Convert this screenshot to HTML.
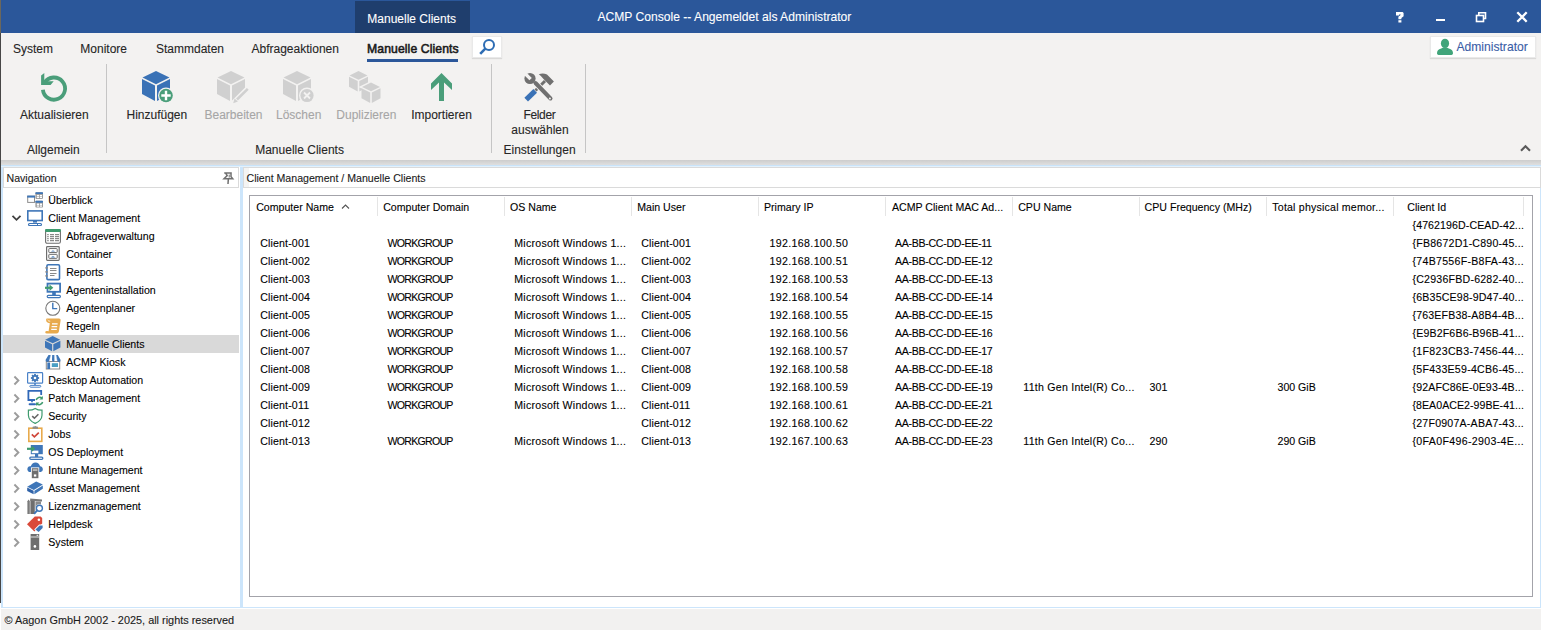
<!DOCTYPE html>
<html><head><meta charset="utf-8"><style>
html,body{margin:0;padding:0;}
body{width:1541px;height:630px;overflow:hidden;position:relative;background:#f3f2f1;font-family:"Liberation Sans", sans-serif;}
.t{position:absolute;white-space:nowrap;-webkit-text-stroke:0.1px currentColor;}
svg{overflow:visible}
</style></head><body>
<div style="position:absolute;left:0px;top:0px;width:1541px;height:33px;background:#2b579a"></div>
<div style="position:absolute;left:355px;top:1px;width:115px;height:32px;background:#1f3e6d"></div>
<div class="t" style="left:367.30px;top:12.84px;font-size:12px;line-height:12px;color:#ffffff;font-weight:normal;">Manuelle Clients</div>
<div class="t" style="left:597.50px;top:10.76px;font-size:12.1px;line-height:12.1px;color:#ffffff;font-weight:normal;">ACMP Console -- Angemeldet als Administrator</div>
<svg style="position:absolute;left:1394px;top:11px" width="11" height="12" viewBox="0 0 11 12"><path d="M2 1 H8.6 L9.6 2 V5.2 L7.4 7 V8.2 H4.4 V5.8 L6.6 4 V3.4 H5 V4.4 H2 Z" fill="#fff"/><rect x="4.4" y="9.2" width="3" height="2.3" fill="#fff"/></svg>
<div style="position:absolute;left:1435.5px;top:18.8px;width:9.5px;height:2.4px;background:#fff"></div>
<svg style="position:absolute;left:1475px;top:11px" width="12" height="12" viewBox="0 0 12 12"><rect x="1.5" y="4.5" width="7" height="6" stroke="#fff" stroke-width="1.6" fill="none"/><path d="M3.8 4.5 V1.8 H10.5 V7.5 H8.5" stroke="#fff" stroke-width="1.6" fill="none"/></svg>
<svg style="position:absolute;left:1516px;top:11px" width="12" height="12" viewBox="0 0 12 12"><path d="M1.3 1.3 L10.7 10.7 M10.7 1.3 L1.3 10.7" stroke="#fff" stroke-width="2.3"/></svg>
<div class="t" style="left:13.00px;top:42.84px;font-size:12px;line-height:12px;color:#262626;font-weight:normal;">System</div>
<div class="t" style="left:80.30px;top:42.84px;font-size:12px;line-height:12px;color:#262626;font-weight:normal;">Monitore</div>
<div class="t" style="left:156.00px;top:42.84px;font-size:12px;line-height:12px;color:#262626;font-weight:normal;">Stammdaten</div>
<div class="t" style="left:251.50px;top:42.84px;font-size:12px;line-height:12px;color:#262626;font-weight:normal;">Abfrageaktionen</div>
<div class="t" style="left:367.00px;top:42.67px;font-size:12.2px;line-height:12.2px;color:#1a1a1a;font-weight:normal;letter-spacing:0.1px;-webkit-text-stroke:0.55px #1a1a1a">Manuelle Clients</div>
<div style="position:absolute;left:367px;top:59px;width:91px;height:3px;background:#2b579a"></div>
<div style="position:absolute;left:472px;top:36px;width:30px;height:22px;background:#fff;border:1px solid #e9e9e9;box-sizing:border-box;box-shadow:0 1px 1px rgba(0,0,0,0.10)"></div>
<svg style="position:absolute;left:478px;top:38px" width="20" height="20" viewBox="0 0 20 20"><circle cx="11" cy="7" r="5" stroke="#2e6db4" stroke-width="2" fill="none"/><path d="M7.3 10.7 L2.2 15.8" stroke="#2e6db4" stroke-width="2.6"/></svg>
<div style="position:absolute;left:1430px;top:36px;width:106px;height:22px;background:#fff;border:1px solid #e9e9e9;box-sizing:border-box;box-shadow:0 1px 1px rgba(0,0,0,0.10)"></div>
<svg style="position:absolute;left:1436px;top:38px" width="18" height="18" viewBox="0 0 18 18"><ellipse cx="9" cy="5.4" rx="4.1" ry="4.7" fill="#40a47a"/><path d="M1 15.6 Q0.8 11.4 5.2 10.4 L7.2 9.6 L10.8 9.6 L12.8 10.4 Q17.2 11.4 17 15.6 Q16.8 17 15.5 17 L2.5 17 Q1.2 17 1 15.6 Z" fill="#40a47a"/></svg>
<div class="t" style="left:1456.50px;top:41.06px;font-size:12.1px;line-height:12.1px;color:#3a5da6;font-weight:normal;">Administrator</div>
<div style="position:absolute;left:106px;top:64px;width:1px;height:89px;background:#c5c5c5"></div>
<div style="position:absolute;left:491px;top:64px;width:1px;height:89px;background:#c5c5c5"></div>
<div style="position:absolute;left:585px;top:64px;width:1px;height:89px;background:#c5c5c5"></div>
<div class="t" style="left:20.00px;top:109.24px;font-size:12px;line-height:12px;color:#262626;font-weight:normal;">Aktualisieren</div>
<div class="t" style="left:126.50px;top:109.24px;font-size:12px;line-height:12px;color:#262626;font-weight:normal;">Hinzufügen</div>
<div class="t" style="left:204.50px;top:109.24px;font-size:12px;line-height:12px;color:#a6a6a6;font-weight:normal;">Bearbeiten</div>
<div class="t" style="left:276.00px;top:109.24px;font-size:12px;line-height:12px;color:#a6a6a6;font-weight:normal;">Löschen</div>
<div class="t" style="left:336.30px;top:109.24px;font-size:12px;line-height:12px;color:#a6a6a6;font-weight:normal;">Duplizieren</div>
<div class="t" style="left:411.20px;top:109.24px;font-size:12px;line-height:12px;color:#262626;font-weight:normal;">Importieren</div>
<div class="t" style="left:523.50px;top:108.84px;font-size:12px;line-height:12px;color:#262626;font-weight:normal;letter-spacing:-0.35px">Felder</div>
<div class="t" style="left:511.30px;top:123.84px;font-size:12px;line-height:12px;color:#262626;font-weight:normal;">auswählen</div>
<div class="t" style="left:27.00px;top:143.84px;font-size:12px;line-height:12px;color:#262626;font-weight:normal;">Allgemein</div>
<div class="t" style="left:255.20px;top:143.84px;font-size:12px;line-height:12px;color:#262626;font-weight:normal;">Manuelle Clients</div>
<div class="t" style="left:503.50px;top:143.84px;font-size:12px;line-height:12px;color:#262626;font-weight:normal;">Einstellungen</div>
<svg style="position:absolute;left:1519px;top:144px" width="12" height="8" viewBox="0 0 12 8"><path d="M2 6.8 L6.5 2.3 L11 6.8" stroke="#5a5a5a" stroke-width="2.1" fill="none"/></svg>
<svg style="position:absolute;left:36px;top:68px" width="36" height="36" viewBox="0 0 36 36"><path d="M6.9 21.7 A11.1 11.1 0 1 0 8.6 14.6" stroke="#4a9e7a" stroke-width="3.8" fill="none"/><path d="M5.1 7.5 L8.3 4.9 L8.3 13.3 L17.7 13.3 L14.6 16.9 L5.1 16.9 Z" fill="#4a9e7a"/></svg>
<svg style="position:absolute;left:142px;top:70px" width="32" height="34" viewBox="0 0 32 34"><path d="M14 1 L27.5 7.6 L14 14.2 L0.5 7.6 Z" fill="#3a72b6"/><path d="M0 9 L13 15.4 L13 31 L0 24 Z" fill="#3a72b6"/><path d="M28 9 L15 15.4 L15 31 L28 24 Z" fill="#3a72b6"/><circle cx="24" cy="25.5" r="8" fill="#f3f2f1"/><circle cx="24" cy="25.5" r="6.8" fill="#4a9e7a"/><path d="M24 20.8 V30.2 M19.3 25.5 H28.7" stroke="#fff" stroke-width="2.4"/></svg>
<svg style="position:absolute;left:217px;top:70px" width="34" height="34" viewBox="0 0 34 34"><path d="M14 1 L27.5 7.6 L14 14.2 L0.5 7.6 Z" fill="#d0d0d0"/><path d="M0 9 L13 15.4 L13 31 L0 24 Z" fill="#d0d0d0"/><path d="M28 9 L15 15.4 L15 31 L28 24 Z" fill="#d0d0d0"/><path d="M15.5 34 L31.5 18" stroke="#f3f2f1" stroke-width="5.4"/><path d="M20 29.5 L30.8 18.8" stroke="#d0d0d0" stroke-width="2.6"/><path d="M16.2 33.2 L17.6 28.4 L20.9 31.6 Z" fill="#d0d0d0"/></svg>
<svg style="position:absolute;left:283px;top:70px" width="32" height="34" viewBox="0 0 32 34"><path d="M14 1 L27.5 7.6 L14 14.2 L0.5 7.6 Z" fill="#d0d0d0"/><path d="M0 9 L13 15.4 L13 31 L0 24 Z" fill="#d0d0d0"/><path d="M28 9 L15 15.4 L15 31 L28 24 Z" fill="#d0d0d0"/><circle cx="24" cy="25.5" r="8" fill="#f3f2f1"/><circle cx="24" cy="25.5" r="6.6" fill="#d0d0d0"/><path d="M21 22.5 L27 28.5 M27 22.5 L21 28.5" stroke="#f3f2f1" stroke-width="1.8"/></svg>
<svg style="position:absolute;left:348px;top:70px" width="34" height="34" viewBox="0 0 34 34"><g transform="translate(1,1)"><path d="M9.5 0 L18.5 4.4 L9.5 8.8 L0.5 4.4 Z" fill="#d0d0d0"/><path d="M0 5.8 L8.7 10.1 L8.7 20.5 L0 15.8 Z" fill="#d0d0d0"/><path d="M19 5.8 L10.3 10.1 L10.3 20.5 L19 15.8 Z" fill="#d0d0d0"/></g><path d="M13 12 L33 12 L33 34 L13 34 Z" fill="#f3f2f1" opacity="0"/><g><path d="M22 11.5 L33.5 17 L22 22.5 L10.5 17 Z" fill="#f3f2f1"/></g><g transform="translate(13.5,12.5)"><path d="M9.5 0 L18.5 4.4 L9.5 8.8 L0.5 4.4 Z" fill="#d0d0d0"/><path d="M0 5.8 L8.7 10.1 L8.7 20.5 L0 15.8 Z" fill="#d0d0d0"/><path d="M19 5.8 L10.3 10.1 L10.3 20.5 L19 15.8 Z" fill="#d0d0d0"/></g></svg>
<svg style="position:absolute;left:430px;top:72px" width="23" height="30" viewBox="0 0 23 30"><path d="M11.5 1 L22 11.5 L22 18 L14 10.5 L14 29 L9 29 L9 10.5 L1 18 L1 11.5 Z" fill="#4a9e7a"/></svg>
<svg style="position:absolute;left:522px;top:72px" width="34" height="32" viewBox="0 0 34 32">
<path d="M16.8 2.3 Q21 0.6 25 2.6 L31.9 9.6 L28 13.5 L21.5 7 Q19.5 4.2 16.8 2.3 Z" fill="#707070"/>
<path d="M23 9 L13.5 18.5" stroke="#707070" stroke-width="3"/>
<path d="M13.2 18.8 L4.2 27.6" stroke="#3a72b6" stroke-width="5.2"/>
<path d="M13.5 11 L28.5 26.5" stroke="#f3f2f1" stroke-width="6" stroke-linecap="round"/>
<circle cx="8" cy="6.5" r="6" fill="#f3f2f1"/>
<path d="M13.5 11 L28.5 26.5" stroke="#707070" stroke-width="4" stroke-linecap="round"/>
<circle cx="8" cy="6.5" r="5.6" fill="#707070"/>
<path d="M8.6 7.1 L2.5 1" stroke="#f3f2f1" stroke-width="3.4"/>
<circle cx="27.9" cy="26.4" r="1" fill="#f3f2f1"/></svg>
<div style="position:absolute;left:0px;top:160px;width:1541px;height:5px;background:linear-gradient(#cdcdcd,#dfdfdf)"></div>
<div style="position:absolute;left:0px;top:165px;width:1541px;height:1px;background:#c9e3f9"></div>
<div style="position:absolute;left:0px;top:166px;width:1541px;height:1px;background:#e3f1fc"></div>
<div style="position:absolute;left:0px;top:0px;width:1px;height:33px;background:#6b675c"></div>
<div style="position:absolute;left:0px;top:33px;width:1px;height:570px;background:#474747"></div>
<div style="position:absolute;left:1px;top:167px;width:239px;height:440px;background:#fff"></div>
<div style="position:absolute;left:1px;top:167px;width:2px;height:440px;background:#cce5fb"></div>
<div style="position:absolute;left:3px;top:167px;width:236px;height:21px;background:#fff;border:1px solid #dadada;box-sizing:border-box"></div>
<div class="t" style="left:6.50px;top:173.43px;font-size:10.6px;line-height:10.6px;color:#1a1a1a;font-weight:normal;">Navigation</div>
<svg style="position:absolute;left:221px;top:170px" width="14" height="16" viewBox="0 0 14 16"><path d="M3.2 2.9 H10.8 M4.6 3 L6.2 5.6 L3 8.8 H11.8 L10 6.6 V3 M7.3 9.4 L7 14" stroke="#707070" stroke-width="1.5" fill="none"/><rect x="7.6" y="4.6" width="1.8" height="3" fill="#999"/></svg>
<div style="position:absolute;left:3px;top:335px;width:236px;height:18px;background:#d9d9d9"></div>
<div style="position:absolute;left:240px;top:167px;width:3px;height:440px;background:#cce5fb"></div>
<div style="position:absolute;left:243px;top:167px;width:1298px;height:440px;background:#fff"></div>
<div style="position:absolute;left:1540px;top:185px;width:1px;height:445px;background:#cce5fb"></div>
<div style="position:absolute;left:243px;top:167px;width:1298px;height:21px;background:#fff;border:1px solid #dadada;box-sizing:border-box"></div>
<div style="position:absolute;left:244px;top:168px;width:5px;height:19px;background:#f4f4f4"></div>
<div class="t" style="left:246.50px;top:173.43px;font-size:10.6px;line-height:10.6px;color:#1a1a1a;font-weight:normal;">Client Management / Manuelle Clients</div>
<div style="position:absolute;left:249px;top:195px;width:1284px;height:402px;background:#fff;border:1px solid #a3a3aa;box-sizing:border-box"></div>
<div style="position:absolute;left:377px;top:197px;width:1px;height:19px;background:#e5e5e5"></div>
<div style="position:absolute;left:504px;top:197px;width:1px;height:19px;background:#e5e5e5"></div>
<div style="position:absolute;left:631px;top:197px;width:1px;height:19px;background:#e5e5e5"></div>
<div style="position:absolute;left:758px;top:197px;width:1px;height:19px;background:#e5e5e5"></div>
<div style="position:absolute;left:885px;top:197px;width:1px;height:19px;background:#e5e5e5"></div>
<div style="position:absolute;left:1012px;top:197px;width:1px;height:19px;background:#e5e5e5"></div>
<div style="position:absolute;left:1139px;top:197px;width:1px;height:19px;background:#e5e5e5"></div>
<div style="position:absolute;left:1266px;top:197px;width:1px;height:19px;background:#e5e5e5"></div>
<div style="position:absolute;left:1393px;top:197px;width:1px;height:19px;background:#e5e5e5"></div>
<div style="position:absolute;left:1523px;top:197px;width:1px;height:19px;background:#e5e5e5"></div>
<div class="t" style="left:256.20px;top:202.03px;font-size:10.6px;line-height:10.6px;color:#000;font-weight:normal;">Computer Name</div>
<div class="t" style="left:383.20px;top:202.03px;font-size:10.6px;line-height:10.6px;color:#000;font-weight:normal;">Computer Domain</div>
<div class="t" style="left:510.00px;top:202.03px;font-size:10.6px;line-height:10.6px;color:#000;font-weight:normal;">OS Name</div>
<div class="t" style="left:637.20px;top:202.03px;font-size:10.6px;line-height:10.6px;color:#000;font-weight:normal;">Main User</div>
<div class="t" style="left:764.00px;top:202.03px;font-size:10.6px;line-height:10.6px;color:#000;font-weight:normal;">Primary IP</div>
<div class="t" style="left:892.00px;top:202.03px;font-size:10.6px;line-height:10.6px;color:#000;font-weight:normal;">ACMP Client MAC Ad...</div>
<div class="t" style="left:1018.20px;top:202.03px;font-size:10.6px;line-height:10.6px;color:#000;font-weight:normal;">CPU Name</div>
<div class="t" style="left:1144.60px;top:202.03px;font-size:10.6px;line-height:10.6px;color:#000;font-weight:normal;">CPU Frequency (MHz)</div>
<div class="t" style="left:1272.30px;top:202.03px;font-size:10.6px;line-height:10.6px;color:#000;font-weight:normal;letter-spacing:0.2px">Total physical memor...</div>
<div class="t" style="left:1407.30px;top:202.03px;font-size:10.6px;line-height:10.6px;color:#000;font-weight:normal;">Client Id</div>
<svg style="position:absolute;left:341px;top:203px" width="10" height="7" viewBox="0 0 10 7"><path d="M1 5.5 L4.5 2 L8 5.5" stroke="#555" stroke-width="1.1" fill="none"/></svg>
<div class="t" style="left:1412.50px;top:220.03px;font-size:10.6px;line-height:10.6px;color:#000;font-weight:normal;letter-spacing:0.098px">{4762196D-CEAD-42...</div>
<div class="t" style="left:1412.50px;top:238.03px;font-size:10.6px;line-height:10.6px;color:#000;font-weight:normal;letter-spacing:0.216px">{FB8672D1-C890-45...</div>
<div class="t" style="left:260.20px;top:238.03px;font-size:10.6px;line-height:10.6px;color:#000;font-weight:normal;letter-spacing:0.15px">Client-001</div>
<div class="t" style="left:641.20px;top:238.03px;font-size:10.6px;line-height:10.6px;color:#000;font-weight:normal;letter-spacing:0.15px">Client-001</div>
<div class="t" style="left:387.60px;top:238.03px;font-size:10.6px;line-height:10.6px;color:#000;font-weight:normal;letter-spacing:-0.75px">WORKGROUP</div>
<div class="t" style="left:514.30px;top:238.03px;font-size:10.6px;line-height:10.6px;color:#000;font-weight:normal;letter-spacing:0.24px">Microsoft Windows 1...</div>
<div class="t" style="left:769.60px;top:238.03px;font-size:10.6px;line-height:10.6px;color:#000;font-weight:normal;letter-spacing:0.35px">192.168.100.50</div>
<div class="t" style="left:895.00px;top:238.03px;font-size:10.6px;line-height:10.6px;color:#000;font-weight:normal;letter-spacing:-0.3px">AA-BB-CC-DD-EE-11</div>
<div class="t" style="left:1412.50px;top:256.03px;font-size:10.6px;line-height:10.6px;color:#000;font-weight:normal;letter-spacing:0.274px">{74B7556F-B8FA-43...</div>
<div class="t" style="left:260.20px;top:256.03px;font-size:10.6px;line-height:10.6px;color:#000;font-weight:normal;letter-spacing:0.15px">Client-002</div>
<div class="t" style="left:641.20px;top:256.03px;font-size:10.6px;line-height:10.6px;color:#000;font-weight:normal;letter-spacing:0.15px">Client-002</div>
<div class="t" style="left:387.60px;top:256.03px;font-size:10.6px;line-height:10.6px;color:#000;font-weight:normal;letter-spacing:-0.75px">WORKGROUP</div>
<div class="t" style="left:514.30px;top:256.03px;font-size:10.6px;line-height:10.6px;color:#000;font-weight:normal;letter-spacing:0.24px">Microsoft Windows 1...</div>
<div class="t" style="left:769.60px;top:256.03px;font-size:10.6px;line-height:10.6px;color:#000;font-weight:normal;letter-spacing:0.35px">192.168.100.51</div>
<div class="t" style="left:895.00px;top:256.03px;font-size:10.6px;line-height:10.6px;color:#000;font-weight:normal;letter-spacing:-0.3px">AA-BB-CC-DD-EE-12</div>
<div class="t" style="left:1412.50px;top:274.03px;font-size:10.6px;line-height:10.6px;color:#000;font-weight:normal;letter-spacing:0.216px">{C2936FBD-6282-40...</div>
<div class="t" style="left:260.20px;top:274.03px;font-size:10.6px;line-height:10.6px;color:#000;font-weight:normal;letter-spacing:0.15px">Client-003</div>
<div class="t" style="left:641.20px;top:274.03px;font-size:10.6px;line-height:10.6px;color:#000;font-weight:normal;letter-spacing:0.15px">Client-003</div>
<div class="t" style="left:387.60px;top:274.03px;font-size:10.6px;line-height:10.6px;color:#000;font-weight:normal;letter-spacing:-0.75px">WORKGROUP</div>
<div class="t" style="left:514.30px;top:274.03px;font-size:10.6px;line-height:10.6px;color:#000;font-weight:normal;letter-spacing:0.24px">Microsoft Windows 1...</div>
<div class="t" style="left:769.60px;top:274.03px;font-size:10.6px;line-height:10.6px;color:#000;font-weight:normal;letter-spacing:0.35px">192.168.100.53</div>
<div class="t" style="left:895.00px;top:274.03px;font-size:10.6px;line-height:10.6px;color:#000;font-weight:normal;letter-spacing:-0.3px">AA-BB-CC-DD-EE-13</div>
<div class="t" style="left:1412.50px;top:292.03px;font-size:10.6px;line-height:10.6px;color:#000;font-weight:normal;letter-spacing:0.186px">{6B35CE98-9D47-40...</div>
<div class="t" style="left:260.20px;top:292.03px;font-size:10.6px;line-height:10.6px;color:#000;font-weight:normal;letter-spacing:0.15px">Client-004</div>
<div class="t" style="left:641.20px;top:292.03px;font-size:10.6px;line-height:10.6px;color:#000;font-weight:normal;letter-spacing:0.15px">Client-004</div>
<div class="t" style="left:387.60px;top:292.03px;font-size:10.6px;line-height:10.6px;color:#000;font-weight:normal;letter-spacing:-0.75px">WORKGROUP</div>
<div class="t" style="left:514.30px;top:292.03px;font-size:10.6px;line-height:10.6px;color:#000;font-weight:normal;letter-spacing:0.24px">Microsoft Windows 1...</div>
<div class="t" style="left:769.60px;top:292.03px;font-size:10.6px;line-height:10.6px;color:#000;font-weight:normal;letter-spacing:0.35px">192.168.100.54</div>
<div class="t" style="left:895.00px;top:292.03px;font-size:10.6px;line-height:10.6px;color:#000;font-weight:normal;letter-spacing:-0.3px">AA-BB-CC-DD-EE-14</div>
<div class="t" style="left:1412.50px;top:310.03px;font-size:10.6px;line-height:10.6px;color:#000;font-weight:normal;letter-spacing:0.157px">{763EFB38-A8B4-4B...</div>
<div class="t" style="left:260.20px;top:310.03px;font-size:10.6px;line-height:10.6px;color:#000;font-weight:normal;letter-spacing:0.15px">Client-005</div>
<div class="t" style="left:641.20px;top:310.03px;font-size:10.6px;line-height:10.6px;color:#000;font-weight:normal;letter-spacing:0.15px">Client-005</div>
<div class="t" style="left:387.60px;top:310.03px;font-size:10.6px;line-height:10.6px;color:#000;font-weight:normal;letter-spacing:-0.75px">WORKGROUP</div>
<div class="t" style="left:514.30px;top:310.03px;font-size:10.6px;line-height:10.6px;color:#000;font-weight:normal;letter-spacing:0.24px">Microsoft Windows 1...</div>
<div class="t" style="left:769.60px;top:310.03px;font-size:10.6px;line-height:10.6px;color:#000;font-weight:normal;letter-spacing:0.35px">192.168.100.55</div>
<div class="t" style="left:895.00px;top:310.03px;font-size:10.6px;line-height:10.6px;color:#000;font-weight:normal;letter-spacing:-0.3px">AA-BB-CC-DD-EE-15</div>
<div class="t" style="left:1412.50px;top:328.03px;font-size:10.6px;line-height:10.6px;color:#000;font-weight:normal;letter-spacing:0.157px">{E9B2F6B6-B96B-41...</div>
<div class="t" style="left:260.20px;top:328.03px;font-size:10.6px;line-height:10.6px;color:#000;font-weight:normal;letter-spacing:0.15px">Client-006</div>
<div class="t" style="left:641.20px;top:328.03px;font-size:10.6px;line-height:10.6px;color:#000;font-weight:normal;letter-spacing:0.15px">Client-006</div>
<div class="t" style="left:387.60px;top:328.03px;font-size:10.6px;line-height:10.6px;color:#000;font-weight:normal;letter-spacing:-0.75px">WORKGROUP</div>
<div class="t" style="left:514.30px;top:328.03px;font-size:10.6px;line-height:10.6px;color:#000;font-weight:normal;letter-spacing:0.24px">Microsoft Windows 1...</div>
<div class="t" style="left:769.60px;top:328.03px;font-size:10.6px;line-height:10.6px;color:#000;font-weight:normal;letter-spacing:0.35px">192.168.100.56</div>
<div class="t" style="left:895.00px;top:328.03px;font-size:10.6px;line-height:10.6px;color:#000;font-weight:normal;letter-spacing:-0.3px">AA-BB-CC-DD-EE-16</div>
<div class="t" style="left:1412.50px;top:346.03px;font-size:10.6px;line-height:10.6px;color:#000;font-weight:normal;letter-spacing:0.304px">{1F823CB3-7456-44...</div>
<div class="t" style="left:260.20px;top:346.03px;font-size:10.6px;line-height:10.6px;color:#000;font-weight:normal;letter-spacing:0.15px">Client-007</div>
<div class="t" style="left:641.20px;top:346.03px;font-size:10.6px;line-height:10.6px;color:#000;font-weight:normal;letter-spacing:0.15px">Client-007</div>
<div class="t" style="left:387.60px;top:346.03px;font-size:10.6px;line-height:10.6px;color:#000;font-weight:normal;letter-spacing:-0.75px">WORKGROUP</div>
<div class="t" style="left:514.30px;top:346.03px;font-size:10.6px;line-height:10.6px;color:#000;font-weight:normal;letter-spacing:0.24px">Microsoft Windows 1...</div>
<div class="t" style="left:769.60px;top:346.03px;font-size:10.6px;line-height:10.6px;color:#000;font-weight:normal;letter-spacing:0.35px">192.168.100.57</div>
<div class="t" style="left:895.00px;top:346.03px;font-size:10.6px;line-height:10.6px;color:#000;font-weight:normal;letter-spacing:-0.3px">AA-BB-CC-DD-EE-17</div>
<div class="t" style="left:1412.50px;top:364.03px;font-size:10.6px;line-height:10.6px;color:#000;font-weight:normal;letter-spacing:0.245px">{5F433E59-4CB6-45...</div>
<div class="t" style="left:260.20px;top:364.03px;font-size:10.6px;line-height:10.6px;color:#000;font-weight:normal;letter-spacing:0.15px">Client-008</div>
<div class="t" style="left:641.20px;top:364.03px;font-size:10.6px;line-height:10.6px;color:#000;font-weight:normal;letter-spacing:0.15px">Client-008</div>
<div class="t" style="left:387.60px;top:364.03px;font-size:10.6px;line-height:10.6px;color:#000;font-weight:normal;letter-spacing:-0.75px">WORKGROUP</div>
<div class="t" style="left:514.30px;top:364.03px;font-size:10.6px;line-height:10.6px;color:#000;font-weight:normal;letter-spacing:0.24px">Microsoft Windows 1...</div>
<div class="t" style="left:769.60px;top:364.03px;font-size:10.6px;line-height:10.6px;color:#000;font-weight:normal;letter-spacing:0.35px">192.168.100.58</div>
<div class="t" style="left:895.00px;top:364.03px;font-size:10.6px;line-height:10.6px;color:#000;font-weight:normal;letter-spacing:-0.3px">AA-BB-CC-DD-EE-18</div>
<div class="t" style="left:1412.50px;top:382.03px;font-size:10.6px;line-height:10.6px;color:#000;font-weight:normal;letter-spacing:0.127px">{92AFC86E-0E93-4B...</div>
<div class="t" style="left:260.20px;top:382.03px;font-size:10.6px;line-height:10.6px;color:#000;font-weight:normal;letter-spacing:0.15px">Client-009</div>
<div class="t" style="left:641.20px;top:382.03px;font-size:10.6px;line-height:10.6px;color:#000;font-weight:normal;letter-spacing:0.15px">Client-009</div>
<div class="t" style="left:387.60px;top:382.03px;font-size:10.6px;line-height:10.6px;color:#000;font-weight:normal;letter-spacing:-0.75px">WORKGROUP</div>
<div class="t" style="left:514.30px;top:382.03px;font-size:10.6px;line-height:10.6px;color:#000;font-weight:normal;letter-spacing:0.24px">Microsoft Windows 1...</div>
<div class="t" style="left:769.60px;top:382.03px;font-size:10.6px;line-height:10.6px;color:#000;font-weight:normal;letter-spacing:0.35px">192.168.100.59</div>
<div class="t" style="left:895.00px;top:382.03px;font-size:10.6px;line-height:10.6px;color:#000;font-weight:normal;letter-spacing:-0.3px">AA-BB-CC-DD-EE-19</div>
<div class="t" style="left:1023.30px;top:382.03px;font-size:10.6px;line-height:10.6px;color:#000;font-weight:normal;letter-spacing:0.24px">11th Gen Intel(R) Co...</div>
<div class="t" style="left:1149.60px;top:382.03px;font-size:10.6px;line-height:10.6px;color:#000;font-weight:normal;">301</div>
<div class="t" style="left:1277.50px;top:382.03px;font-size:10.6px;line-height:10.6px;color:#000;font-weight:normal;">300 GiB</div>
<div class="t" style="left:1412.50px;top:400.03px;font-size:10.6px;line-height:10.6px;color:#000;font-weight:normal;letter-spacing:0.039px">{8EA0ACE2-99BE-41...</div>
<div class="t" style="left:260.20px;top:400.03px;font-size:10.6px;line-height:10.6px;color:#000;font-weight:normal;letter-spacing:0.15px">Client-011</div>
<div class="t" style="left:641.20px;top:400.03px;font-size:10.6px;line-height:10.6px;color:#000;font-weight:normal;letter-spacing:0.15px">Client-011</div>
<div class="t" style="left:387.60px;top:400.03px;font-size:10.6px;line-height:10.6px;color:#000;font-weight:normal;letter-spacing:-0.75px">WORKGROUP</div>
<div class="t" style="left:514.30px;top:400.03px;font-size:10.6px;line-height:10.6px;color:#000;font-weight:normal;letter-spacing:0.24px">Microsoft Windows 1...</div>
<div class="t" style="left:769.60px;top:400.03px;font-size:10.6px;line-height:10.6px;color:#000;font-weight:normal;letter-spacing:0.35px">192.168.100.61</div>
<div class="t" style="left:895.00px;top:400.03px;font-size:10.6px;line-height:10.6px;color:#000;font-weight:normal;letter-spacing:-0.3px">AA-BB-CC-DD-EE-21</div>
<div class="t" style="left:1412.50px;top:418.03px;font-size:10.6px;line-height:10.6px;color:#000;font-weight:normal;letter-spacing:0.216px">{27F0907A-ABA7-43...</div>
<div class="t" style="left:260.20px;top:418.03px;font-size:10.6px;line-height:10.6px;color:#000;font-weight:normal;letter-spacing:0.15px">Client-012</div>
<div class="t" style="left:641.20px;top:418.03px;font-size:10.6px;line-height:10.6px;color:#000;font-weight:normal;letter-spacing:0.15px">Client-012</div>
<div class="t" style="left:769.60px;top:418.03px;font-size:10.6px;line-height:10.6px;color:#000;font-weight:normal;letter-spacing:0.35px">192.168.100.62</div>
<div class="t" style="left:895.00px;top:418.03px;font-size:10.6px;line-height:10.6px;color:#000;font-weight:normal;letter-spacing:-0.3px">AA-BB-CC-DD-EE-22</div>
<div class="t" style="left:1412.50px;top:436.03px;font-size:10.6px;line-height:10.6px;color:#000;font-weight:normal;letter-spacing:0.333px">{0FA0F496-2903-4E...</div>
<div class="t" style="left:260.20px;top:436.03px;font-size:10.6px;line-height:10.6px;color:#000;font-weight:normal;letter-spacing:0.15px">Client-013</div>
<div class="t" style="left:641.20px;top:436.03px;font-size:10.6px;line-height:10.6px;color:#000;font-weight:normal;letter-spacing:0.15px">Client-013</div>
<div class="t" style="left:387.60px;top:436.03px;font-size:10.6px;line-height:10.6px;color:#000;font-weight:normal;letter-spacing:-0.75px">WORKGROUP</div>
<div class="t" style="left:514.30px;top:436.03px;font-size:10.6px;line-height:10.6px;color:#000;font-weight:normal;letter-spacing:0.24px">Microsoft Windows 1...</div>
<div class="t" style="left:769.60px;top:436.03px;font-size:10.6px;line-height:10.6px;color:#000;font-weight:normal;letter-spacing:0.35px">192.167.100.63</div>
<div class="t" style="left:895.00px;top:436.03px;font-size:10.6px;line-height:10.6px;color:#000;font-weight:normal;letter-spacing:-0.3px">AA-BB-CC-DD-EE-23</div>
<div class="t" style="left:1023.30px;top:436.03px;font-size:10.6px;line-height:10.6px;color:#000;font-weight:normal;letter-spacing:0.24px">11th Gen Intel(R) Co...</div>
<div class="t" style="left:1149.60px;top:436.03px;font-size:10.6px;line-height:10.6px;color:#000;font-weight:normal;">290</div>
<div class="t" style="left:1277.50px;top:436.03px;font-size:10.6px;line-height:10.6px;color:#000;font-weight:normal;">290 GiB</div>
<div class="t" style="left:48.30px;top:195.03px;font-size:10.6px;line-height:10.6px;color:#000;font-weight:normal;">Überblick</div>
<div class="t" style="left:48.30px;top:213.03px;font-size:10.6px;line-height:10.6px;color:#000;font-weight:normal;">Client Management</div>
<svg style="position:absolute;left:11px;top:214px" width="11" height="8" viewBox="0 0 11 8"><path d="M1.5 1.8 L5.5 5.8 L9.5 1.8" stroke="#404040" stroke-width="1.8" fill="none"/></svg>
<div class="t" style="left:66.20px;top:231.03px;font-size:10.6px;line-height:10.6px;color:#000;font-weight:normal;">Abfrageverwaltung</div>
<div class="t" style="left:66.20px;top:249.03px;font-size:10.6px;line-height:10.6px;color:#000;font-weight:normal;">Container</div>
<div class="t" style="left:66.20px;top:267.03px;font-size:10.6px;line-height:10.6px;color:#000;font-weight:normal;">Reports</div>
<div class="t" style="left:66.20px;top:285.03px;font-size:10.6px;line-height:10.6px;color:#000;font-weight:normal;">Agenteninstallation</div>
<div class="t" style="left:66.20px;top:303.03px;font-size:10.6px;line-height:10.6px;color:#000;font-weight:normal;">Agentenplaner</div>
<div class="t" style="left:66.20px;top:321.03px;font-size:10.6px;line-height:10.6px;color:#000;font-weight:normal;">Regeln</div>
<div class="t" style="left:66.20px;top:339.03px;font-size:10.6px;line-height:10.6px;color:#000;font-weight:normal;">Manuelle Clients</div>
<div class="t" style="left:66.20px;top:357.03px;font-size:10.6px;line-height:10.6px;color:#000;font-weight:normal;">ACMP Kiosk</div>
<div class="t" style="left:48.30px;top:375.03px;font-size:10.6px;line-height:10.6px;color:#000;font-weight:normal;">Desktop Automation</div>
<svg style="position:absolute;left:12px;top:375px" width="8" height="11" viewBox="0 0 8 11"><path d="M2.4 1.5 L6.4 5.5 L2.4 9.5" stroke="#9c9c9c" stroke-width="1.9" fill="none"/></svg>
<div class="t" style="left:48.30px;top:393.03px;font-size:10.6px;line-height:10.6px;color:#000;font-weight:normal;">Patch Management</div>
<svg style="position:absolute;left:12px;top:393px" width="8" height="11" viewBox="0 0 8 11"><path d="M2.4 1.5 L6.4 5.5 L2.4 9.5" stroke="#9c9c9c" stroke-width="1.9" fill="none"/></svg>
<div class="t" style="left:48.30px;top:411.03px;font-size:10.6px;line-height:10.6px;color:#000;font-weight:normal;">Security</div>
<svg style="position:absolute;left:12px;top:411px" width="8" height="11" viewBox="0 0 8 11"><path d="M2.4 1.5 L6.4 5.5 L2.4 9.5" stroke="#9c9c9c" stroke-width="1.9" fill="none"/></svg>
<div class="t" style="left:48.30px;top:429.03px;font-size:10.6px;line-height:10.6px;color:#000;font-weight:normal;">Jobs</div>
<svg style="position:absolute;left:12px;top:429px" width="8" height="11" viewBox="0 0 8 11"><path d="M2.4 1.5 L6.4 5.5 L2.4 9.5" stroke="#9c9c9c" stroke-width="1.9" fill="none"/></svg>
<div class="t" style="left:48.30px;top:447.03px;font-size:10.6px;line-height:10.6px;color:#000;font-weight:normal;">OS Deployment</div>
<svg style="position:absolute;left:12px;top:447px" width="8" height="11" viewBox="0 0 8 11"><path d="M2.4 1.5 L6.4 5.5 L2.4 9.5" stroke="#9c9c9c" stroke-width="1.9" fill="none"/></svg>
<div class="t" style="left:48.30px;top:465.03px;font-size:10.6px;line-height:10.6px;color:#000;font-weight:normal;">Intune Management</div>
<svg style="position:absolute;left:12px;top:465px" width="8" height="11" viewBox="0 0 8 11"><path d="M2.4 1.5 L6.4 5.5 L2.4 9.5" stroke="#9c9c9c" stroke-width="1.9" fill="none"/></svg>
<div class="t" style="left:48.30px;top:483.03px;font-size:10.6px;line-height:10.6px;color:#000;font-weight:normal;">Asset Management</div>
<svg style="position:absolute;left:12px;top:483px" width="8" height="11" viewBox="0 0 8 11"><path d="M2.4 1.5 L6.4 5.5 L2.4 9.5" stroke="#9c9c9c" stroke-width="1.9" fill="none"/></svg>
<div class="t" style="left:48.30px;top:501.03px;font-size:10.6px;line-height:10.6px;color:#000;font-weight:normal;">Lizenzmanagement</div>
<svg style="position:absolute;left:12px;top:501px" width="8" height="11" viewBox="0 0 8 11"><path d="M2.4 1.5 L6.4 5.5 L2.4 9.5" stroke="#9c9c9c" stroke-width="1.9" fill="none"/></svg>
<div class="t" style="left:48.30px;top:519.03px;font-size:10.6px;line-height:10.6px;color:#000;font-weight:normal;">Helpdesk</div>
<svg style="position:absolute;left:12px;top:519px" width="8" height="11" viewBox="0 0 8 11"><path d="M2.4 1.5 L6.4 5.5 L2.4 9.5" stroke="#9c9c9c" stroke-width="1.9" fill="none"/></svg>
<div class="t" style="left:48.30px;top:537.03px;font-size:10.6px;line-height:10.6px;color:#000;font-weight:normal;">System</div>
<svg style="position:absolute;left:12px;top:537px" width="8" height="11" viewBox="0 0 8 11"><path d="M2.4 1.5 L6.4 5.5 L2.4 9.5" stroke="#9c9c9c" stroke-width="1.9" fill="none"/></svg>
<svg style="position:absolute;left:27px;top:191px" width="18" height="18" viewBox="0 0 18 18"><rect x="0.7" y="5.2" width="6.8" height="6.2" stroke="#8c8c8c" stroke-width="1" fill="#fff"/><rect x="0.2" y="4.6" width="7.8" height="2" fill="#3e76b8"/><rect x="8.4" y="1.2" width="7.6" height="6.7" rx="0.8" fill="#9a9a9a"/><rect x="8.4" y="1.2" width="7.6" height="1.9" rx="0.6" fill="#3e76b8"/><rect x="9.8" y="3.9000000000000004" width="2.2" height="1.5" fill="#fff"/><rect x="12.8" y="3.9000000000000004" width="2.2" height="1.5" fill="#fff"/><rect x="9.8" y="5.8" width="2.2" height="1.3" fill="#fff"/><rect x="12.8" y="5.8" width="2.2" height="1.3" fill="#fff"/><rect x="8.4" y="9.8" width="7.6" height="6.7" rx="0.8" fill="#9a9a9a"/><rect x="8.4" y="9.8" width="7.6" height="1.9" rx="0.6" fill="#3e76b8"/><rect x="9.8" y="12.5" width="2.2" height="1.5" fill="#fff"/><rect x="12.8" y="12.5" width="2.2" height="1.5" fill="#fff"/><rect x="9.8" y="14.4" width="2.2" height="1.3" fill="#fff"/><rect x="12.8" y="14.4" width="2.2" height="1.3" fill="#fff"/></svg>
<svg style="position:absolute;left:27px;top:209px" width="18" height="18" viewBox="0 0 18 18"><rect x="0.8" y="1.9" width="14.4" height="9.6" stroke="#3e76b8" stroke-width="1.6" fill="#fff"/><rect x="6" y="12" width="4" height="1.6" fill="#3e76b8"/><rect x="1.5" y="14.5" width="13" height="2" rx="1" stroke="#3e76b8" stroke-width="1.2" fill="none"/><path d="M10.5 14.5 V16.5" stroke="#3e76b8" stroke-width="1"/></svg>
<svg style="position:absolute;left:45px;top:227px" width="18" height="18" viewBox="0 0 18 18"><rect x="0.6" y="2.6" width="14.8" height="13.6" rx="1.5" stroke="#6d6d6d" stroke-width="1.1" fill="#fff"/><rect x="0.1" y="2.1" width="15.8" height="3" rx="1" fill="#3f9b6e"/><rect x="2.2" y="7.2" width="1.5" height="1" fill="#6d6d6d"/><rect x="5" y="7.2" width="4" height="1" fill="#6d6d6d"/><rect x="10" y="7.2" width="4" height="1" fill="#6d6d6d"/><rect x="2.2" y="9.2" width="1.5" height="1" fill="#6d6d6d"/><rect x="5" y="9.2" width="4" height="1" fill="#6d6d6d"/><rect x="10" y="9.2" width="4" height="1" fill="#6d6d6d"/><rect x="2.2" y="11.2" width="1.5" height="1" fill="#6d6d6d"/><rect x="5" y="11.2" width="4" height="1" fill="#6d6d6d"/><rect x="10" y="11.2" width="4" height="1" fill="#6d6d6d"/><rect x="2.2" y="13.2" width="1.5" height="1" fill="#6d6d6d"/><rect x="5" y="13.2" width="4" height="1" fill="#6d6d6d"/><rect x="10" y="13.2" width="4" height="1" fill="#6d6d6d"/></svg>
<svg style="position:absolute;left:45px;top:245px" width="18" height="18" viewBox="0 0 18 18"><rect x="1.6" y="1.6" width="12.6" height="13.8" rx="0.8" stroke="#6d6d6d" stroke-width="1.2" fill="#fff"/><rect x="3.8" y="3.55" width="8.4" height="4" rx="0.6" stroke="#6d6d6d" stroke-width="1" fill="none"/><rect x="3.8" y="9.35" width="8.4" height="4" rx="0.6" stroke="#6d6d6d" stroke-width="1" fill="none"/><path d="M6 6.6 Q8 4.4 10 6.6 Z M6 12.4 Q8 10.2 10 12.4 Z" fill="#3e76b8"/></svg>
<svg style="position:absolute;left:45px;top:263px" width="18" height="18" viewBox="0 0 18 18"><rect x="1.9" y="1.8" width="12.6" height="14.8" rx="1.2" stroke="#3e76b8" stroke-width="1.6" fill="#fff"/><rect x="0.3" y="4.2" width="2.6" height="1.4" fill="#8a8a8a"/><rect x="0.3" y="8.2" width="2.6" height="1.4" fill="#8a8a8a"/><rect x="0.3" y="12.2" width="2.6" height="1.4" fill="#8a8a8a"/><rect x="5" y="5" width="6.5" height="1" fill="#8a8a8a"/><rect x="5" y="7" width="6.5" height="1" fill="#8a8a8a"/><rect x="5" y="10" width="6.5" height="1" fill="#8a8a8a"/><rect x="5" y="12" width="4.5" height="1" fill="#8a8a8a"/></svg>
<svg style="position:absolute;left:45px;top:281px" width="18" height="18" viewBox="0 0 18 18"><rect x="2.5" y="2.6" width="12.6" height="8.2" stroke="#3e76b8" stroke-width="1.8" fill="#fff"/><rect x="7.2" y="10.5" width="3.6" height="4" fill="#3e76b8"/><rect x="2.2" y="14.4" width="13.2" height="2.2" rx="1.1" stroke="#3e76b8" stroke-width="1.2" fill="#fff"/><path d="M0 6.8 H6" stroke="#3f9b6e" stroke-width="2.2"/><path d="M4.5 3.6 L8.3 6.8 L4.5 10 Z" fill="#3f9b6e"/></svg>
<svg style="position:absolute;left:45px;top:299px" width="18" height="18" viewBox="0 0 18 18"><circle cx="7.8" cy="9.3" r="7" stroke="#777" stroke-width="1.1" fill="#fff"/><path d="M7.8 3.8 V9.6 H12.2" stroke="#3e76b8" stroke-width="1.4" fill="none"/></svg>
<svg style="position:absolute;left:45px;top:317px" width="18" height="18" viewBox="0 0 18 18"><path d="M1.6 1.4 H14 Q16 1.4 15.6 3.4 L13.9 14.6 Q13.5 16.6 11.5 16.6 H2 Q0.2 16.6 0.2 15.2 Q0.4 13.8 2.2 14 L3.6 14.2 L4.8 6.2 Q2.6 6 1.4 4.4 Q0.6 2.4 1.6 1.4 Z" fill="#e8aa4c"/><path d="M2.6 3 Q3.6 4.4 5.2 4.2" stroke="#fff" stroke-width="0.8" fill="none"/><path d="M7 6.8 H12.6 M6.6 9.6 H12.2 M6.2 12.4 H11.8" stroke="#fff" stroke-width="1.2"/></svg>
<svg style="position:absolute;left:45px;top:335px" width="18" height="18" viewBox="0 0 18 18"><path d="M7.7 1 L15.2 4.7 L7.7 8.3 L0.2 4.7 Z" fill="#3e76b8"/><path d="M0 5.8 L7.1 9.3 L7.1 16.2 L0 12.4 Z" fill="#3e76b8"/><path d="M15.4 5.8 L8.3 9.3 L8.3 16.2 L15.4 12.4 Z" fill="#3e76b8"/></svg>
<svg style="position:absolute;left:45px;top:353px" width="18" height="18" viewBox="0 0 18 18"><rect x="1.3" y="8.5" width="13.4" height="7.5" stroke="#8a8a8a" stroke-width="1" fill="#fff"/><rect x="2.3" y="9.5" width="2.8" height="6.5" fill="#3e76b8"/><rect x="6.8" y="10.2" width="6.2" height="3.8" fill="#4a9fc4"/><path d="M3.5 2 L0.5 7 Q0.5 9 2.5 9 Q4.2 9 4.5 7 L5.8 2 Z M7.2 2 L7 7 Q7.2 9 8.3 9 Q9.4 9 9.6 7 L9.4 2 Z M11 2 L12 7 Q12.3 9 14 9 Q15.8 9 15.6 7 L12.8 2 Z" fill="#3e76b8"/><path d="M5.8 2 L4.5 7.5 M9.4 2 L9.6 7.5 M11 2 L12 7.5" stroke="#c8d8ec" stroke-width="0.5"/></svg>
<svg style="position:absolute;left:27px;top:371px" width="18" height="18" viewBox="0 0 18 18"><rect x="0.6" y="1.6" width="15" height="10.6" rx="0.8" stroke="#4a82c8" stroke-width="1.2" fill="#fff"/><circle cx="8" cy="7" r="3" fill="#3e76b8"/><rect x="7.1" y="2.9" width="1.8" height="2" fill="#3e76b8" transform="rotate(0 8 7)"/><rect x="7.1" y="2.9" width="1.8" height="2" fill="#3e76b8" transform="rotate(45 8 7)"/><rect x="7.1" y="2.9" width="1.8" height="2" fill="#3e76b8" transform="rotate(90 8 7)"/><rect x="7.1" y="2.9" width="1.8" height="2" fill="#3e76b8" transform="rotate(135 8 7)"/><rect x="7.1" y="2.9" width="1.8" height="2" fill="#3e76b8" transform="rotate(180 8 7)"/><rect x="7.1" y="2.9" width="1.8" height="2" fill="#3e76b8" transform="rotate(225 8 7)"/><rect x="7.1" y="2.9" width="1.8" height="2" fill="#3e76b8" transform="rotate(270 8 7)"/><rect x="7.1" y="2.9" width="1.8" height="2" fill="#3e76b8" transform="rotate(315 8 7)"/><circle cx="8" cy="7" r="1.3" fill="#fff"/><rect x="7" y="12.2" width="2" height="1.6" fill="#4a82c8"/><rect x="2.8" y="14.4" width="11" height="1.8" rx="0.9" stroke="#4a82c8" stroke-width="1" fill="#fff"/></svg>
<svg style="position:absolute;left:27px;top:389px" width="18" height="18" viewBox="0 0 18 18"><path d="M8 11 H1.4 V1.8 H14.2 V6" stroke="#3068b8" stroke-width="1.8" fill="none"/><path d="M5 11 V13.3" stroke="#3068b8" stroke-width="1.6"/><path d="M8 15.2 H2.6" stroke="#3068b8" stroke-width="2" stroke-linecap="round"/><path d="M9.2 11 A3.6 3.6 0 0 1 15.2 9.3" stroke="#3f9b6e" stroke-width="1.6" fill="none"/><path d="M15.8 7 L15.8 10.6 L12.4 10.4 Z" fill="#3f9b6e"/><path d="M15.6 13 A3.6 3.6 0 0 1 9.6 14.7" stroke="#3f9b6e" stroke-width="1.6" fill="none"/><path d="M9 17 L9 13.4 L12.4 13.6 Z" fill="#3f9b6e"/></svg>
<svg style="position:absolute;left:27px;top:407px" width="18" height="18" viewBox="0 0 18 18"><path d="M8.2 1.4 Q11.4 3.4 15 3.2 L15 8.2 Q14.8 13.4 8.2 16.4 Q1.6 13.4 1.4 8.2 L1.4 3.2 Q5 3.4 8.2 1.4 Z" stroke="#3f9b6e" stroke-width="1.2" fill="#fff"/><path d="M5.2 9.2 L7.4 11.2 L11.4 7.2" stroke="#666" stroke-width="1.6" fill="none"/></svg>
<svg style="position:absolute;left:27px;top:425px" width="18" height="18" viewBox="0 0 18 18"><rect x="1.8" y="3.2" width="13" height="13.2" stroke="#e8aa4c" stroke-width="1.6" fill="#fff"/><path d="M5.5 3.8 V2.6 Q5.5 1.6 6.5 1.6 L7.3 1.6 Q8.3 0.6 9.3 1.6 L10 1.6 Q11 1.6 11 2.6 V3.8 Z" fill="#8c8c8c"/><path d="M4.8 9.4 L7.4 11.8 L11.8 7.6" stroke="#d0463b" stroke-width="1.7" fill="none"/></svg>
<svg style="position:absolute;left:27px;top:443px" width="18" height="18" viewBox="0 0 18 18"><rect x="3.8" y="2" width="12" height="9.2" fill="#3e76b8"/><rect x="4.8" y="7.6" width="6.6" height="2.6" fill="#fff"/><path d="M0 5.8 H5.5" stroke="#3f9b6e" stroke-width="2.2"/><path d="M4.6 2.6 L8.3 5.8 L4.6 9 Z" fill="#3f9b6e"/><rect x="8" y="11" width="3.2" height="3.2" fill="#3e76b8"/><rect x="2.8" y="14.2" width="13" height="2.2" rx="1.1" stroke="#3e76b8" stroke-width="1.3" fill="#fff"/></svg>
<svg style="position:absolute;left:27px;top:461px" width="18" height="18" viewBox="0 0 18 18"><path d="M2 11 Q-0.5 9.5 0.8 6.6 Q1.8 4.8 3.8 5.2 Q5 1.4 8.5 1.4 Q12 1.4 13.1 5.2 Q15.4 5 15.9 8 Q16 10.4 13.8 11 Z" fill="#3e76b8"/><rect x="4" y="6.4" width="8.2" height="11" fill="#fff"/><rect x="4.8" y="7.2" width="6.6" height="10" fill="#6e6e6e"/><rect x="5.8" y="8.4" width="4.6" height="1.3" fill="#d8d8d8"/><rect x="6.9" y="13.4" width="2.4" height="2.2" fill="#fff"/></svg>
<svg style="position:absolute;left:27px;top:479px" width="18" height="18" viewBox="0 0 18 18"><path d="M0.2 7.8 L9.2 2.4 L15.8 5.6 L6.8 11 Z" fill="#3e76b8"/><path d="M0.2 8.6 L6.6 11.8 L6.6 15.2 L0.2 12 Z" fill="#2f62a8"/><path d="M7.4 11.8 L15.8 6.4 L15.8 9.8 L7.4 15.2 Z" fill="#3e76b8"/></svg>
<svg style="position:absolute;left:27px;top:497px" width="18" height="18" viewBox="0 0 18 18"><path d="M0.4 4.2 L1.6 2.4 L2.8 4.2 V17 H0.4 Z" fill="#7a7a7a"/><rect x="3.4" y="3" width="4.4" height="14" fill="#6e6e6e"/><path d="M3.2 1.6 L15 2.4 L15 4.6 L3.2 3.8 Z" fill="#7a7a7a"/><rect x="8.4" y="4.4" width="5.6" height="9" fill="#8a8a8a"/><circle cx="12.4" cy="11.2" r="3.9" fill="#fff"/><circle cx="12.4" cy="11.2" r="3" stroke="#3e76b8" stroke-width="1.4" fill="#fff"/><path d="M10.2 13.4 L7.6 16.4" stroke="#3e76b8" stroke-width="1.8" stroke-linecap="round"/></svg>
<svg style="position:absolute;left:27px;top:515px" width="18" height="18" viewBox="0 0 18 18"><path d="M0 9.3 L7.8 1.4 L13.6 1.4 L15.2 3 L15.2 8.6 L7.4 16.6 Z" fill="#d9493a"/><circle cx="11.9" cy="4.7" r="1.3" fill="#fff"/><path d="M7.2 14.6 L12.2 9.6 L16.4 9.6 L16.4 13.2 L11.6 18 Z" fill="#fff"/><path d="M8.4 14.6 L12.6 10.4 L15.6 10.4 L15.6 13 L11.6 17 Z" fill="#3e76b8"/></svg>
<svg style="position:absolute;left:27px;top:533px" width="18" height="18" viewBox="0 0 18 18"><rect x="3.6" y="1" width="8.6" height="16" fill="#6e6e6e"/><rect x="3.6" y="3.6" width="8.6" height="0.8" fill="#fff"/><rect x="9.6" y="1.8" width="1.6" height="1" fill="#fff"/><circle cx="7.9" cy="13.4" r="1.3" fill="#fff"/></svg>
<div style="position:absolute;left:0px;top:603px;width:1px;height:27px;background:#fff"></div>
<div style="position:absolute;left:1px;top:607px;width:1540px;height:1px;background:#cce5fb"></div>
<div style="position:absolute;left:0px;top:608px;width:1541px;height:1px;background:#fff"></div>
<div style="position:absolute;left:1px;top:609px;width:1540px;height:21px;background:#f2f1f0"></div>
<div class="t" style="left:4.50px;top:615.27px;font-size:10.9px;line-height:10.9px;color:#1a1a1a;font-weight:normal;">© Aagon GmbH 2002 - 2025, all rights reserved</div>
</body></html>
